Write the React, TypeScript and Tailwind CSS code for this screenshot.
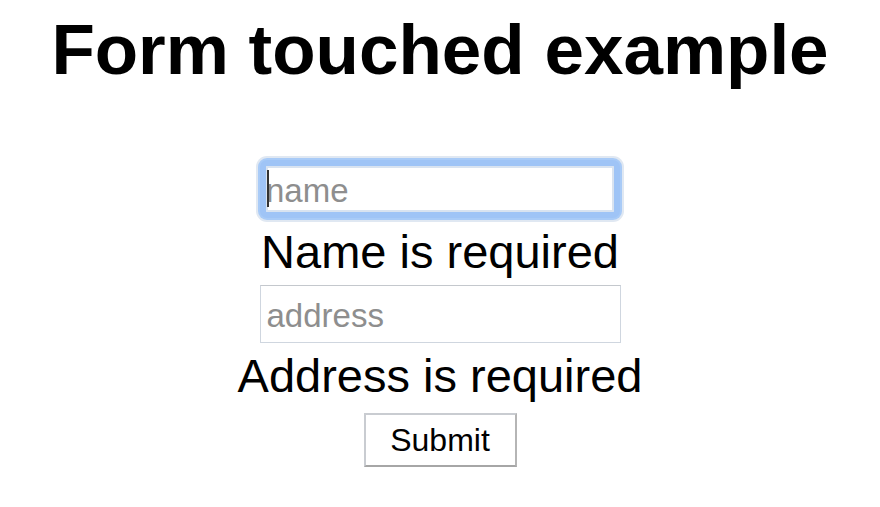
import React from 'react';

const font = { fontFamily: '"Liberation Sans", Arial, sans-serif' };

const App: React.FC = () => {
  return (
    <div className="w-[880px] h-[507px] bg-white text-black text-center" style={font}>
      <h1 className="pt-[10px] text-[71px] leading-[80px] font-bold">Form touched example</h1>

      <form className="mt-[70px] flex flex-col items-center" onSubmit={(e) => e.preventDefault()}>
        <div className="relative">
          <input
            type="text"
            placeholder="name"
            className="w-[360px] h-[58px] pl-0 pt-[4px] text-[33px] border-[6px] border-[#9fc4f6] rounded-[7px] outline-none bg-white placeholder:text-[#8e8e8e] shadow-[inset_0_0_0_2px_#d9e3f0,0_0_0_2px_#a9cbf7,0_0_0_4px_#e0e8f2]"
          />
          <span className="absolute left-[7px] top-[10px] w-[2px] h-[37px] bg-[#333]" />
        </div>
        <div className="text-[47px] leading-[67px]">Name is required</div>

        <input
          type="text"
          placeholder="address"
          className="w-[361px] h-[58px] pl-[6px] pt-[4px] text-[33px] border border-[#cfd6df] border-t-[#c4c8cd] outline-none bg-white placeholder:text-[#8e8e8e]"
        />
        <div className="text-[47px] leading-[66px]">Address is required</div>

        <button
          type="submit"
          className="mt-[4px] w-[153px] h-[54px] text-[32px] bg-white border-2 border-[#c9ccd1] border-b-[#a6a6a6] border-r-[#b5b5b5]"
        >
          Submit
        </button>
      </form>
    </div>
  );
};

export default App;
